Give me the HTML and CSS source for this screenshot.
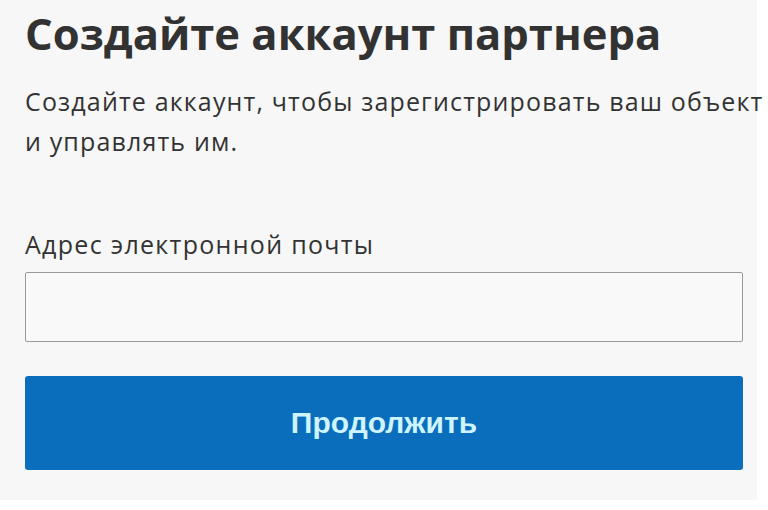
FILE: index.html
```html
<!DOCTYPE html>
<html lang="ru">
<head>
    <meta charset="UTF-8">
    <meta name="viewport" content="width=device-width, initial-scale=1.0">
    <title>Создайте аккаунт партнера</title>
    <link rel="stylesheet" href="styles.css">
</head>
<body>
    <div class="card">
        <h1>Создайте аккаунт партнера</h1>
        <p class="intro">Создайте аккаунт, чтобы зарегистрировать ваш объект и управлять им.</p>
        <form class="signup">
            <label for="email">Адрес электронной почты</label>
            <input type="email" id="email">
            <button type="button" class="button">Продолжить</button>
        </form>
    </div>
</body>
</html>
```

FILE: styles.css
```css
body {
    margin: 0;
    background-color: #fff;
    font-family: "Open Sans", "Noto Sans", sans-serif;
    color: #333;
}
.card {
    width: 757px;
    height: 500px;
    box-sizing: border-box;
    padding: 9px 14px 0 25px;
    background-color: #f7f7f7;
}
h1 {
    margin: 0;
    font-size: 43.5px;
    font-weight: 700;
    line-height: 50px;
    color: #323232;
}
.intro {
    width: 745px;
    margin: 22px 0 0;
    font-size: 25px;
    letter-spacing: 1.15px;
    line-height: 40px;
    color: #333;
}
.signup {
    width: 718px;
    margin-top: 66px;
}
label {
    display: block;
    font-size: 25px;
    letter-spacing: 1.3px;
    line-height: 34px;
    margin-bottom: 11px;
}
input[type="email"] {
    display: block;
    width: 100%;
    height: 70px;
    box-sizing: border-box;
    border: 1px solid #999;
    border-radius: 2px;
    background-color: #f9f9f9;
}
.button {
    display: block;
    width: 100%;
    height: 94px;
    margin-top: 34px;
    border: 0;
    border-radius: 3px;
    background-color: #0a6ebd;
    font-family: "Liberation Sans", Arial, sans-serif;
    font-size: 30px;
    font-weight: bold;
    color: #cdf4ff;
}
```
